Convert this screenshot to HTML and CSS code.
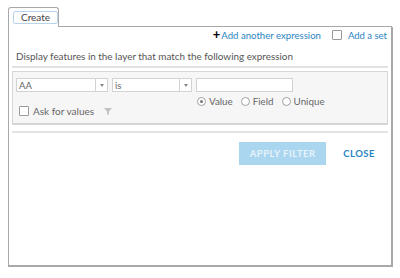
FILE: index.html
```html
<!DOCTYPE html>
<html lang="en">
<head>
    <meta charset="UTF-8">
    <title>Filter</title>
    <link rel="stylesheet" href="styles.css">
</head>
<body>
    <div class="tabs">
        <div class="tab"><span class="tab-label">Create</span></div>
        <div class="tab-rest"></div>
    </div>
    <div class="panel">
        <div class="top-actions">
            <a class="add-expr"><span class="plus">+</span>Add another expression</a>
            <label class="add-set"><span class="box"></span>Add a set</label>
        </div>
        <p class="intro">Display features in the layer that match the following expression</p>
        <hr class="sep">
        <div class="expr">
            <div class="expr-row">
                <div class="select wide"><span>AA</span><i class="arrow"></i></div>
                <div class="select"><span>is</span><i class="arrow"></i></div>
                <div class="value-col">
                    <div class="text-input"></div>
                    <div class="radios">
                        <label><span class="radio on"></span>Value</label>
                        <label><span class="radio"></span>Field</label>
                        <label><span class="radio"></span>Unique</label>
                    </div>
                </div>
            </div>
            <div class="ask">
                <span class="box"></span>Ask for values
                <svg class="funnel" width="8" height="8" viewBox="0 0 8 8"><path d="M0 1h8L5 4.5V8L3 7V4.5z" fill="#c3c3c3"/></svg>
            </div>
        </div>
        <hr class="sep low">
        <div class="buttons">
            <button class="apply">APPLY FILTER</button>
            <button class="close">CLOSE</button>
        </div>
    </div>
</body>
</html>
```

FILE: styles.css
```css
body { margin: 0; padding: 7px 8px 0 8px; font-family: Lato, "Open Sans", sans-serif; font-size: 10px; color: #5a5a5a; background: #fff; }
.tabs { display: flex; height: 20px; }
.tab { width: 51px; border: 1px solid #a8a8a8; border-bottom: none; border-radius: 3px 3px 0 0; padding: 3px 0 0 4px; box-sizing: border-box; background: #fff; }
.tab-label { display: inline-block; border: 1px solid #b8d3ee; border-radius: 2px; padding: 0 7px; line-height: 11px; font-size: 10px; color: #444; }
.tab-rest { flex: 1; border-bottom: 1px solid #a8a8a8; }
.panel { height: 240px; width: 385px; box-sizing: border-box; border: 1px solid #a8a8a8; border-top: none; border-right-width: 2px; border-bottom-width: 2px; padding: 0 3px; }
.top-actions { display: flex; justify-content: flex-end; align-items: center; gap: 11px; padding: 0 1px 0 0; height: 16px; }
.add-expr { color: #2a85c3; font-size: 9.6px; }
.plus { color: #000; font-weight: bold; font-size: 13px; line-height: 10px; margin-right: 1px; }
.add-set { display: flex; align-items: center; color: #2a85c3; gap: 6px; font-size: 9.5px; }
.box { display: inline-block; width: 8px; height: 8px; border: 1px solid #9a9a9a; border-radius: 1px; background: #fff; }
.intro { margin: 7px 0 0 4px; font-size: 9.9px; line-height: 12px; color: #555; }
.sep { margin: 4px 0 0; border: none; border-top: 2px solid #e2e2e2; }
.sep.low { margin-top: 6px; }
.expr { margin-top: 3px; height: 54px; box-sizing: border-box; background: #f6f6f6; border: 1px solid #d6d6d6; border-bottom-width: 2px; padding: 6px 3px 0 3px; }
.expr-row { display: flex; gap: 4px; align-items: flex-start; }
.select { width: 80px; height: 14px; box-sizing: border-box; border: 1px solid #d2d2d2; background: #fff; display: flex; align-items: center; font-size: 9.5px; color: #666; padding-left: 2px; }
.select.wide { width: 92px; }
.select span { flex: 1; }
.arrow { width: 11px; height: 12px; border-left: 1px solid #d2d2d2; display: flex; align-items: center; justify-content: center; }
.arrow::after { content: ""; border-left: 2.5px solid transparent; border-right: 2.5px solid transparent; border-top: 3px solid #888; }
.value-col { display: flex; flex-direction: column; }
.text-input { width: 97px; height: 14px; box-sizing: border-box; border: 1px solid #d2d2d2; background: #fff; }
.radios { display: flex; gap: 8px; margin-top: 3px; padding-left: 1px; font-size: 9.8px; color: #666; }
.radios label { display: flex; align-items: center; gap: 3px; }
.radio { width: 7px; height: 7px; border: 1px solid #a0a0a0; border-radius: 50%; background: #fff; display: inline-flex; align-items: center; justify-content: center; }
.radio.on::after { content: ""; width: 3px; height: 3px; border-radius: 50%; background: #777; }
.ask { display: flex; align-items: center; gap: 4px; margin-top: -2px; padding-left: 3px; font-size: 10px; color: #666; }
.funnel { margin-left: 6px; }
.buttons { display: flex; justify-content: flex-end; align-items: center; margin-top: 9px; padding-right: 13px; gap: 17px; }
button { font-family: Lato, "Open Sans", sans-serif; font-weight: bold; font-size: 9.5px; letter-spacing: 0.5px; border: none; cursor: pointer; }
.apply { width: 87px; height: 23px; background: #abd6f0; color: #e6f3fa; }
.close { background: none; color: #2a85c3; padding: 0; }
```
